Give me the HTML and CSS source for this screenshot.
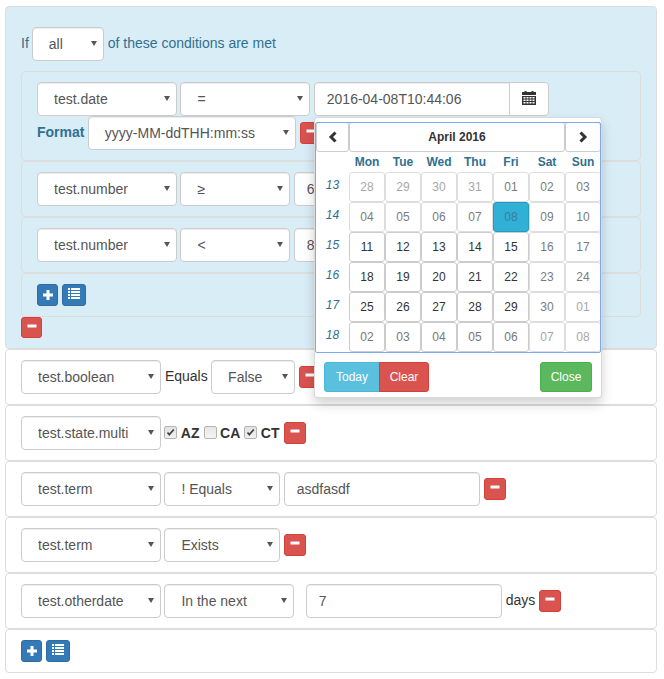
FILE: index.html

```html
<!DOCTYPE html>
<html lang="en">
<head>
    <meta charset="UTF-8">
    <meta name="viewport" content="width=device-width, initial-scale=1.0">
    <title>Condition Builder</title>
    <link rel="stylesheet" href="styles.css">
</head>
<body>
    <svg class="icon-defs" width="0" height="0">
        <symbol id="i-plus" viewBox="0 0 12 12"><path d="M4.500 1h3v3.500H11v3H7.500V11h-3V7.500H1v-3h3.500z"/></symbol>
        <symbol id="i-list" viewBox="0 0 12 12"><path d="M0 1.100h2v1.800H0zM3 1.100h9v1.800H3zM0 4.100h2v1.800H0zM3 4.100h9v1.800H3zM0 7.100h2v1.800H0zM3 7.100h9v1.800H3zM0 10.100h2v1.800H0zM3 10.100h9v1.800H3z"/></symbol>
        <symbol id="i-minus" viewBox="0 0 12 12"><path d="M1.500 4.500h9v3h-9z"/></symbol>
    </svg>

    <div class="page">
        <div class="row group">
            <div class="line head">
                <span>If</span>
                <select class="field w-72"><option>all</option><option>any</option></select>
                <span>of these conditions are met</span>
            </div>

            <div class="row nested">
                <div class="line">
                    <select class="field w-140"><option>test.date</option></select>
                    <select class="field w-130"><option>=</option></select>
                    <div class="input-group">
                        <input class="field w-196 joined" type="text" value="2016-04-08T10:44:06">
                        <button class="cal-btn" type="button">
                            <svg width="14" height="14" viewBox="0 0 14 14"><path fill="#333" d="M2.500 0h2v1h5V0h2v1H14v3H0V1h2.500zM0 5h14v9H0zM1.500 6v1.500h2V6zM4.500 6v1.500h2V6zM7.500 6v1.500h2V6zM10.500 6v1.500h2V6zM1.500 8.500V10h2V8.500zM4.500 8.500V10h2V8.500zM7.500 8.500V10h2V8.500zM10.500 8.500V10h2V8.500zM1.500 11v1.500h2V11zM4.500 11v1.500h2V11zM7.500 11v1.500h2V11zM10.500 11v1.500h2V11z" fill-rule="evenodd"/></svg>
                        </button>
                    </div>
                </div>
                <div class="line">
                    <label class="format-label">Format</label>
                    <select class="field w-208"><option>yyyy-MM-ddTHH:mm:ss</option></select>
                    <button class="btn-xs danger" type="button"><svg><use href="#i-minus"/></svg></button>
                </div>
            </div>

            <div class="row nested">
                <div class="line">
                    <select class="field w-140"><option>test.number</option></select>
                    <select class="field w-110"><option>≥</option></select>
                    <input class="field w-196" type="text" value="6">
                    <button class="btn-xs danger" type="button"><svg><use href="#i-minus"/></svg></button>
                </div>
            </div>

            <div class="row nested">
                <div class="line">
                    <select class="field w-140"><option>test.number</option></select>
                    <select class="field w-110"><option>&lt;</option></select>
                    <input class="field w-196" type="text" value="8">
                    <button class="btn-xs danger" type="button"><svg><use href="#i-minus"/></svg></button>
                </div>
            </div>

            <div class="row nested">
                <div class="line">
                    <button class="btn-xs primary" type="button"><svg><use href="#i-plus"/></svg></button>
                    <button class="btn-xs primary wide" type="button"><svg><use href="#i-list"/></svg></button>
                </div>
            </div>

            <button class="btn-xs danger group-remove" type="button"><svg><use href="#i-minus"/></svg></button>
        </div>

        <div class="row">
            <div class="line">
                <select class="field w-140"><option>test.boolean</option></select>
                <span class="word">Equals</span>
                <select class="field w-84"><option>False</option><option>True</option></select>
                <button class="btn-xs danger" type="button"><svg><use href="#i-minus"/></svg></button>
            </div>
        </div>

        <div class="row">
            <div class="line">
                <select class="field w-140"><option>test.state.multi</option></select>
                <input class="check" type="checkbox" checked><label class="check-label">AZ</label>
                <input class="check" type="checkbox"><label class="check-label">CA</label>
                <input class="check" type="checkbox" checked><label class="check-label">CT</label>
                <button class="btn-xs danger" type="button"><svg><use href="#i-minus"/></svg></button>
            </div>
        </div>

        <div class="row">
            <div class="line">
                <select class="field w-140"><option>test.term</option></select>
                <select class="field w-116"><option>! Equals</option></select>
                <input class="field w-196" type="text" value="asdfasdf">
                <button class="btn-xs danger" type="button"><svg><use href="#i-minus"/></svg></button>
            </div>
        </div>

        <div class="row">
            <div class="line">
                <select class="field w-140"><option>test.term</option></select>
                <select class="field w-116"><option>Exists</option></select>
                <button class="btn-xs danger" type="button"><svg><use href="#i-minus"/></svg></button>
            </div>
        </div>

        <div class="row">
            <div class="line">
                <select class="field w-140"><option>test.otherdate</option></select>
                <select class="field w-130"><option>In the next</option></select>
                <input class="field w-196 push" type="text" value="7">
                <span class="word">days</span>
                <button class="btn-xs danger" type="button"><svg><use href="#i-minus"/></svg></button>
            </div>
        </div>

        <div class="row">
            <div class="line">
                <button class="btn-xs primary" type="button"><svg><use href="#i-plus"/></svg></button>
                <button class="btn-xs primary wide" type="button"><svg><use href="#i-list"/></svg></button>
            </div>
        </div>

        <div class="popup">
            <div class="datepicker">
                <div class="cal-grid">
                    <button class="cell nav" type="button"><svg width="10" height="12" viewBox="0 0 10 12"><path d="M7.500 1.500 3 6l4.500 4.500" fill="none" stroke="#333" stroke-width="3"/></svg></button>
                    <button class="cell title" type="button">April 2016</button>
                    <button class="cell nav" type="button"><svg width="10" height="12" viewBox="0 0 10 12"><path d="M2.500 1.500 7 6l-4.500 4.500" fill="none" stroke="#333" stroke-width="3"/></svg></button>

                    <span></span>
                    <span class="day-name">Mon</span><span class="day-name">Tue</span><span class="day-name">Wed</span><span class="day-name">Thu</span><span class="day-name">Fri</span><span class="day-name">Sat</span><span class="day-name">Sun</span>

                    <em class="week">13</em>
                    <button class="cell muted off" type="button">28</button>
                    <button class="cell muted off" type="button">29</button>
                    <button class="cell muted off" type="button">30</button>
                    <button class="cell muted off" type="button">31</button>
                    <button class="cell off" type="button">01</button>
                    <button class="cell off" type="button">02</button>
                    <button class="cell off" type="button">03</button>

                    <em class="week">14</em>
                    <button class="cell off" type="button">04</button>
                    <button class="cell off" type="button">05</button>
                    <button class="cell off" type="button">06</button>
                    <button class="cell off" type="button">07</button>
                    <button class="cell selected" type="button">08</button>
                    <button class="cell off" type="button">09</button>
                    <button class="cell off" type="button">10</button>

                    <em class="week">15</em>
                    <button class="cell" type="button">11</button>
                    <button class="cell" type="button">12</button>
                    <button class="cell" type="button">13</button>
                    <button class="cell" type="button">14</button>
                    <button class="cell" type="button">15</button>
                    <button class="cell off" type="button">16</button>
                    <button class="cell off" type="button">17</button>

                    <em class="week">16</em>
                    <button class="cell" type="button">18</button>
                    <button class="cell" type="button">19</button>
                    <button class="cell" type="button">20</button>
                    <button class="cell" type="button">21</button>
                    <button class="cell" type="button">22</button>
                    <button class="cell off" type="button">23</button>
                    <button class="cell off" type="button">24</button>

                    <em class="week">17</em>
                    <button class="cell" type="button">25</button>
                    <button class="cell" type="button">26</button>
                    <button class="cell" type="button">27</button>
                    <button class="cell" type="button">28</button>
                    <button class="cell" type="button">29</button>
                    <button class="cell off" type="button">30</button>
                    <button class="cell muted off" type="button">01</button>

                    <em class="week">18</em>
                    <button class="cell muted" type="button">02</button>
                    <button class="cell muted" type="button">03</button>
                    <button class="cell muted" type="button">04</button>
                    <button class="cell muted" type="button">05</button>
                    <button class="cell muted" type="button">06</button>
                    <button class="cell muted off" type="button">07</button>
                    <button class="cell muted off" type="button">08</button>
                </div>
            </div>
            <div class="popup-foot">
                <div class="btn-pair">
                    <button class="btn-sm info" type="button">Today</button>
                    <button class="btn-sm clear" type="button">Clear</button>
                </div>
                <button class="btn-sm success" type="button">Close</button>
            </div>
        </div>
    </div>
</body>
</html>
```

FILE: styles.css

```css
* {
    box-sizing: border-box;
}

body {
    margin: 0;
    font-family: "Liberation Sans", Arial, sans-serif;
    font-size: 14px;
    line-height: 20px;
    color: #333;
    background-color: #fff;
}

.icon-defs {
    position: absolute;
}

.page {
    position: relative;
    width: 652px;
    margin: 6px 0 0 5px;
}

.row {
    padding: 10px 15px;
    border: 1px solid #ddd;
    border-radius: 4px;
}

.group {
    padding: 20px 15px 10px;
    background-color: #d9edf7;
}

.nested {
    overflow: hidden;
}

.line {
    display: flex;
    align-items: center;
    gap: 3.4px;
}

.line > span,
.format-label {
    margin-bottom: 2px;
}

.word {
    margin-left: 0.5px;
}

.head {
    gap: 3px;
    margin-bottom: 10px;
    color: #31708f;
}

.head select {
    margin-right: 1px;
}

.field {
    height: 34px;
    padding: 6px 12px;
    font-family: inherit;
    font-size: 14px;
    line-height: 20px;
    color: #555;
    background-color: #fff;
    border: 1px solid #ccc;
    border-radius: 4px;
    box-shadow: inset 0 1px 1px rgba(0, 0, 0, 0.075);
    flex: none;
}

select.field {
    padding-left: 16px;
    appearance: none;
    background-image: url("data:image/svg+xml,%3Csvg xmlns='http://www.w3.org/2000/svg' width='6' height='5'%3E%3Cpath d='M0 0h6L3 5z' fill='%23555'/%3E%3C/svg%3E");
    background-repeat: no-repeat;
    background-position: right 6px top 13px;
}

.w-72 { width: 72px; }
.w-84 { width: 84px; }
.w-110 { width: 110px; }
.w-116 { width: 116px; }
.w-130 { width: 130px; }
.w-140 { width: 140px; }
.w-196 { width: 196px; }
.w-208 { width: 208px; }

.push {
    margin-left: 8px;
}

.input-group {
    display: flex;
}

.joined {
    border-top-right-radius: 0;
    border-bottom-right-radius: 0;
}

.cal-btn {
    display: flex;
    align-items: center;
    justify-content: center;
    width: 40px;
    height: 34px;
    margin-left: -1px;
    padding: 0 0 2px;
    background-color: #fff;
    border: 1px solid #ccc;
    border-radius: 0 4px 4px 0;
}

.format-label {
    font-weight: bold;
    color: #31708f;
}

.btn-xs {
    display: flex;
    align-items: center;
    justify-content: center;
    width: 22px;
    height: 22px;
    padding: 0;
    border: 1px solid;
    border-radius: 3px;
    flex: none;
}

.btn-xs svg {
    width: 12px;
    height: 12px;
    fill: #fff;
}

.danger {
    margin-left: 0.5px;
    background-color: #d9534f;
    border-color: #d43f3a;
}

.danger svg,
.wide svg {
    margin-top: -4px;
}

.primary {
    width: 21px;
    background-color: #337ab7;
    border-color: #2e6da4;
}

.wide {
    width: 24px;
    margin-left: 0.6px;
}

.group-remove {
    width: 21px;
    height: 21px;
    margin-left: 0;
}

.check {
    width: 13px;
    height: 13px;
    margin: -1px 0 0;
    appearance: none;
    background: linear-gradient(#e6e6e6, #f4f4f4);
    border: 1px solid #b4b4b4;
    border-radius: 2px;
}

.check:checked {
    background-image: url("data:image/svg+xml,%3Csvg xmlns='http://www.w3.org/2000/svg' width='11' height='11'%3E%3Cpath d='M2.500 5.500l1.800 2.200L8.800 2.500' fill='none' stroke='%23444' stroke-width='1.800'/%3E%3C/svg%3E"), linear-gradient(#e2e2e2, #f0f0f0);
}

.check-label {
    margin-right: 0.8px;
    font-weight: bold;
}

/* date popup sits over the rows */
.popup {
    position: absolute;
    left: 309px;
    top: 111px;
    width: 288px;
    height: 281px;
    padding-top: 4px;
    background-color: #fff;
    border: 1px solid rgba(0, 0, 0, 0.15);
    border-radius: 4px;
    box-shadow: 0 6px 12px rgba(0, 0, 0, 0.175);
}

.datepicker {
    position: relative;
    padding-left: 1px;
}

.datepicker::after {
    content: "";
    position: absolute;
    inset: 0 0 -1px 0;
    border: 1px solid #82a8ec;
    border-radius: 2px;
    pointer-events: none;
}

.cal-grid {
    display: grid;
    grid-template-columns: 33px repeat(7, 36px);
    grid-template-rows: 30px 20px repeat(6, 30px);
}

.cell {
    padding: 0;
    font-family: inherit;
    font-size: 12px;
    color: #333;
    background-color: #fff;
    border: 1px solid #ccc;
    border-radius: 3px;
}

.nav {
    display: flex;
    align-items: center;
    justify-content: center;
}

.title {
    grid-column: span 6;
    font-weight: bold;
}

.day-name {
    font-size: 12px;
    font-weight: bold;
    line-height: 20px;
    text-align: center;
    color: #31708f;
}

.week {
    font-size: 12px;
    line-height: 27px;
    text-align: center;
    color: #31708f;
}

.muted {
    color: #777;
}

.off {
    opacity: 0.65;
}

.selected {
    color: #3a7d9f;
    background-color: #31b0d5;
    border-color: #269abc;
}

.popup-foot {
    display: flex;
    justify-content: space-between;
    padding: 10px 9px 5px;
}

.btn-pair {
    display: flex;
}

.btn-sm {
    height: 30px;
    padding: 0;
    font-family: inherit;
    font-size: 12px;
    color: #fff;
    border: 1px solid;
    border-radius: 3px;
}

.info {
    width: 56px;
    background-color: #5bc0de;
    border-color: #46b8da;
    border-radius: 3px 0 0 3px;
}

.clear {
    width: 50px;
    margin-left: -1px;
    background-color: #d9534f;
    border-color: #d43f3a;
    border-radius: 0 3px 3px 0;
}

.success {
    width: 52px;
    background-color: #5cb85c;
    border-color: #4cae4c;
}
```
